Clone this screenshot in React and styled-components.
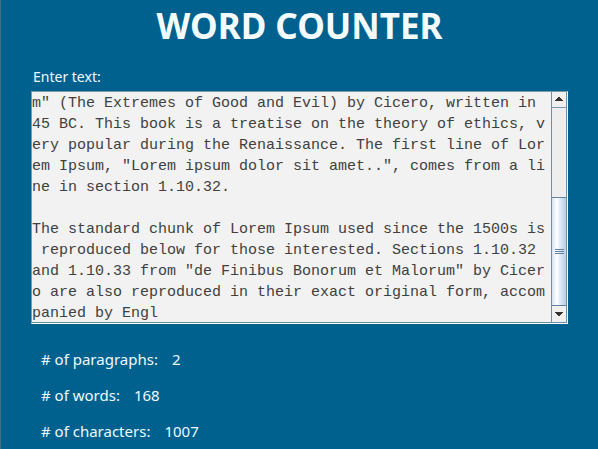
import React, { useState } from "react";
import styled, { createGlobalStyle } from "styled-components";

const GlobalStyle = createGlobalStyle`
  * { box-sizing: border-box; }
  body { margin: 0; background: #00618f; }
`;

const Page = styled.main`
  min-height: 100vh;
  padding: 5px 30px;
  border-left: 1px solid #3d7283;
  background: #00618f;
  color: #eefaff;
  font-family: "Noto Sans", sans-serif;
`;

const Title = styled.h1`
  margin: 0;
  font-size: 35px;
  line-height: 42px;
  font-weight: 700;
  text-align: center;
  color: #f4fbfd;
`;

const FieldLabel = styled.label`
  display: block;
  margin: 19px 0 4px 2px;
  font-size: 14px;
  line-height: 21px;
`;

const ScrollPane = styled.div`
  display: flex;
  height: 233px;
  border: 1px solid #7a9aab;
  border-right-color: #fff;
  border-bottom-color: #fff;
  background: #f2f2f2;
`;

const TextArea = styled.textarea`
  flex: 1;
  min-width: 0;
  margin: 0;
  padding: 1px 0 0;
  border: 0;
  border-bottom: 1px solid #62909a;
  outline: 0;
  resize: none;
  overflow: hidden;
  background: #f2f2f2;
  color: #404040;
  font: 15px/21px "Liberation Mono", monospace;
  white-space: break-spaces;
  line-break: anywhere;
`;

const ScrollBar = styled.div`
  display: flex;
  flex-direction: column;
  width: 16px;
  border: 1px solid #6f8fa8;
  border-top: 0;
  background: #eee;
`;

const ArrowButton = styled.button`
  display: flex;
  align-items: center;
  justify-content: center;
  height: 16px;
  padding: 0;
  border: 0;
  border-bottom: ${(p) => (p.$down ? "0" : "1px solid #7a9aab")};
  background: #f0f0f0;
`;

const Track = styled.div`
  display: flex;
  flex: 1;
  flex-direction: column;
  justify-content: flex-end;
`;

const Thumb = styled.div`
  display: flex;
  flex-direction: column;
  align-items: center;
  justify-content: center;
  gap: 1px;
  height: 109px;
  border-top: 1px solid #6382a0;
  border-bottom: 1px solid #6382a0;
  background: linear-gradient(90deg, #d5e3f2, #fff 35%, #dce8f5 60%, #b8cfe5);
`;

const Grip = styled.span`
  width: 9px;
  height: 1px;
  background: #6382a0;
`;

const Stats = styled.dl`
  display: grid;
  gap: 13px;
  margin: 24px 0 0 10px;
`;

const Stat = styled.div`
  display: flex;
  gap: 14px;
  font-size: 15px;
  line-height: 23px;
  dt, dd { margin: 0; }
`;

const excerpt =
  'm" (The Extremes of Good and Evil) by Cicero, written in 45 BC. This book is a treatise on the theory of ethics, very popular during the Renaissance. The first line of Lorem Ipsum, "Lorem ipsum dolor sit amet..", comes from a line in section 1.10.32.\n\nThe standard chunk of Lorem Ipsum used since the 1500s is reproduced below for those interested. Sections 1.10.32 and 1.10.33 from "de Finibus Bonorum et Malorum" by Cicero are also reproduced in their exact original form, accompanied by Engl';

const stats = [
  ["# of paragraphs:", 2],
  ["# of words:", 168],
  ["# of characters:", 1007],
];

export default function App() {
  const [text, setText] = useState(excerpt);
  return (
    <>
      <GlobalStyle />
      <Page>
        <Title>WORD COUNTER</Title>
        <FieldLabel htmlFor="text">Enter text:</FieldLabel>
        <ScrollPane>
          <TextArea id="text" spellCheck={false} value={text} onChange={(e) => setText(e.target.value)} />
          <ScrollBar>
            <ArrowButton type="button" aria-label="Scroll up">
              <svg width="8" height="5"><path d="M3 0h2v1h1v1h1v1h1v1H0V3h1V2h1V1h1z" fill="#333" /></svg>
            </ArrowButton>
            <Track>
              <Thumb><Grip /><Grip /><Grip /></Thumb>
            </Track>
            <ArrowButton type="button" aria-label="Scroll down" $down>
              <svg width="8" height="5"><path d="M0 0h8v1H7v1H6v1H5v1H3V3H2V2H1V1H0z" fill="#333" /></svg>
            </ArrowButton>
          </ScrollBar>
        </ScrollPane>
        <Stats>
          {stats.map(([name, value]) => (
            <Stat key={name}><dt>{name}</dt><dd>{value}</dd></Stat>
          ))}
        </Stats>
      </Page>
    </>
  );
}
